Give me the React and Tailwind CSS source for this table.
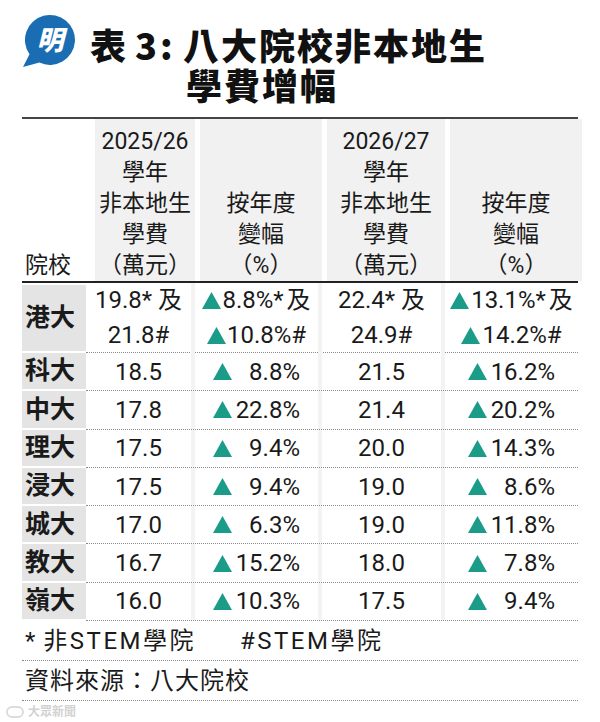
import React from 'react'

const rows = [
  { name: "科大", fee1: "18.5", pct1: "8.8%", fee2: "21.5", pct2: "16.2%" },
  { name: "中大", fee1: "17.8", pct1: "22.8%", fee2: "21.4", pct2: "20.2%" },
  { name: "理大", fee1: "17.5", pct1: "9.4%", fee2: "20.0", pct2: "14.3%" },
  { name: "浸大", fee1: "17.5", pct1: "9.4%", fee2: "19.0", pct2: "8.6%" },
  { name: "城大", fee1: "17.0", pct1: "6.3%", fee2: "19.0", pct2: "11.8%" },
  { name: "教大", fee1: "16.7", pct1: "15.2%", fee2: "18.0", pct2: "7.8%" },
  { name: "嶺大", fee1: "16.0", pct1: "10.3%", fee2: "17.5", pct2: "9.4%" },
]

const Up = () => (
  <svg width="19" height="17" viewBox="0 0 19 17" className="inline-block align-[-1px] shrink-0">
    <polygon points="9.5,0 19,17 0,17" fill="#1a9c89" />
  </svg>
)

const Logo = () => (
  <svg width="54" height="54" viewBox="0 0 54 54" className="shrink-0">
    <path d="M1 53 L7.5 40.3 A25 25 0 1 1 17.4 48.6 Z" fill="#1b6db3" />
    <text x="28" y="36" textAnchor="middle" fill="#fff" fontSize="27" fontWeight="900"
      fontStyle="italic" fontFamily="'Noto Sans CJK TC', sans-serif">明</text>
  </svg>
)

const HeadCell = ({ lines }) => (
  <div className="bg-[#f1f1f1] border-l-[5px] border-white flex flex-col justify-end items-center pb-0">
    {lines.map((l, i) => <div key={i} className="leading-[31px] whitespace-nowrap">{l}</div>)}
  </div>
)

const Pct = ({ value }) => (
  <div className="flex items-center justify-center">
    <Up />
    <span className="w-[68px] text-right">{value}</span>
  </div>
)

export default function App() {
  return (
    <div className="w-[600px] h-[722px] bg-white overflow-hidden text-[#1a1a1a] font-[Roboto,'Noto_Sans_CJK_TC',sans-serif]">
      <div className="flex items-start pt-[14px] pl-[22px]">
        <Logo />
        <div className="flex ml-[14px] mt-[10px] text-[36px] leading-[40px] font-black tracking-[2px] font-['Noto_Sans_CJK_TC',sans-serif] text-[#111]">
          <div className="w-[93px] whitespace-nowrap">
            <span>表</span>
            <span className="ml-[7px]">3</span>
            <span className="ml-[1px]">:</span>
          </div>
          <div>
            <div className="whitespace-nowrap">八大院校非本地生</div>
            <div className="ml-[3px]">學費增幅</div>
          </div>
        </div>
      </div>

      <div className="mx-[22px] mt-[13px]">
        <div className="grid grid-cols-[68px_105px_127px_123px_137px] h-[166px] border-t-2 border-b-2 border-t-[#444] border-b-[#222] text-[23px]">
          <div className="flex items-end pl-[3px] leading-[31px]">院校</div>
          <HeadCell lines={["2025/26", "學年", "非本地生", "學費", "（萬元）"]} />
          <HeadCell lines={["按年度", "變幅", "（%）"]} />
          <HeadCell lines={["2026/27", "學年", "非本地生", "學費", "（萬元）"]} />
          <HeadCell lines={["按年度", "變幅", "（%）"]} />
        </div>

        <div className="flex h-[70px] text-[24px]">
          <div className="w-[68px] bg-[#e4e4e4] border-t-2 border-b-2 border-white flex items-center pl-[3px] font-bold text-[25px]">港大</div>
          <div className="flex-1 grid grid-cols-[105px_127px_123px_137px] border-b border-dotted border-[#8a8a8a] leading-[35px]">
            <div className="flex flex-col items-center justify-center">
              <div>19.8* 及</div>
              <div>21.8#</div>
            </div>
            <div className="flex flex-col items-center justify-center border-l-4 border-solid border-[#f3f3f3]">
              <div className="flex items-center whitespace-nowrap"><Up /><span className="ml-[1px]">8.8%*<span className="ml-[3px]">及</span></span></div>
              <div className="flex items-center whitespace-nowrap"><Up /><span className="ml-[1px]">10.8%#</span></div>
            </div>
            <div className="flex flex-col items-center justify-center border-l-4 border-solid border-[#f3f3f3]">
              <div>22.4* 及</div>
              <div>24.9#</div>
            </div>
            <div className="flex flex-col items-center justify-center border-l-4 border-solid border-[#f3f3f3]">
              <div className="flex items-center whitespace-nowrap"><Up /><span className="ml-[2px]">13.1%*<span className="ml-[3px]">及</span></span></div>
              <div className="flex items-center whitespace-nowrap"><Up /><span className="ml-[2px]">14.2%#</span></div>
            </div>
          </div>
        </div>

        {rows.map((r, i) =>
          <div key={i} className="flex h-[38.3px] text-[24px]">
            <div className="w-[68px] bg-[#e4e4e4] border-b-2 border-white flex items-center pl-[3px] font-bold text-[25px]">{r.name}</div>
            <div className="flex-1 grid grid-cols-[105px_127px_123px_137px] border-b border-dotted border-[#8a8a8a]">
              <div className="flex items-center justify-center">{r.fee1}</div>
              <div className="flex items-center justify-center border-l-4 border-solid border-[#f3f3f3]">
                <Pct value={r.pct1} />
              </div>
              <div className="flex items-center justify-center border-l-4 border-solid border-[#f3f3f3]">{r.fee2}</div>
              <div className="flex items-center justify-center border-l-4 border-solid border-[#f3f3f3]">
                <Pct value={r.pct2} />
              </div>
            </div>
          </div>
        )}

        <div className="flex items-center h-[40px] border-b border-dotted border-[#8a8a8a] text-[24px] pl-[3px]">
          <span>*</span>
          <span className="ml-[8px] tracking-[2.5px]">非STEM學院</span>
          <span className="ml-[44px] tracking-[2.5px]">#STEM學院</span>
        </div>
        <div className="flex items-center h-[40px] border-b border-dotted border-[#8a8a8a] text-[24px] pl-[3px] tracking-[1px]">
          資料來源：八大院校
        </div>
      </div>

      <div className="flex items-center ml-[6px] mt-[2px] text-[12px] text-[#d2d2d2] font-bold">
        <span className="w-[18px] h-[12px] rounded-full border-2 border-[#dcdcdc] mr-[4px]"></span>
        大眾新聞
      </div>
    </div>
  )
}
